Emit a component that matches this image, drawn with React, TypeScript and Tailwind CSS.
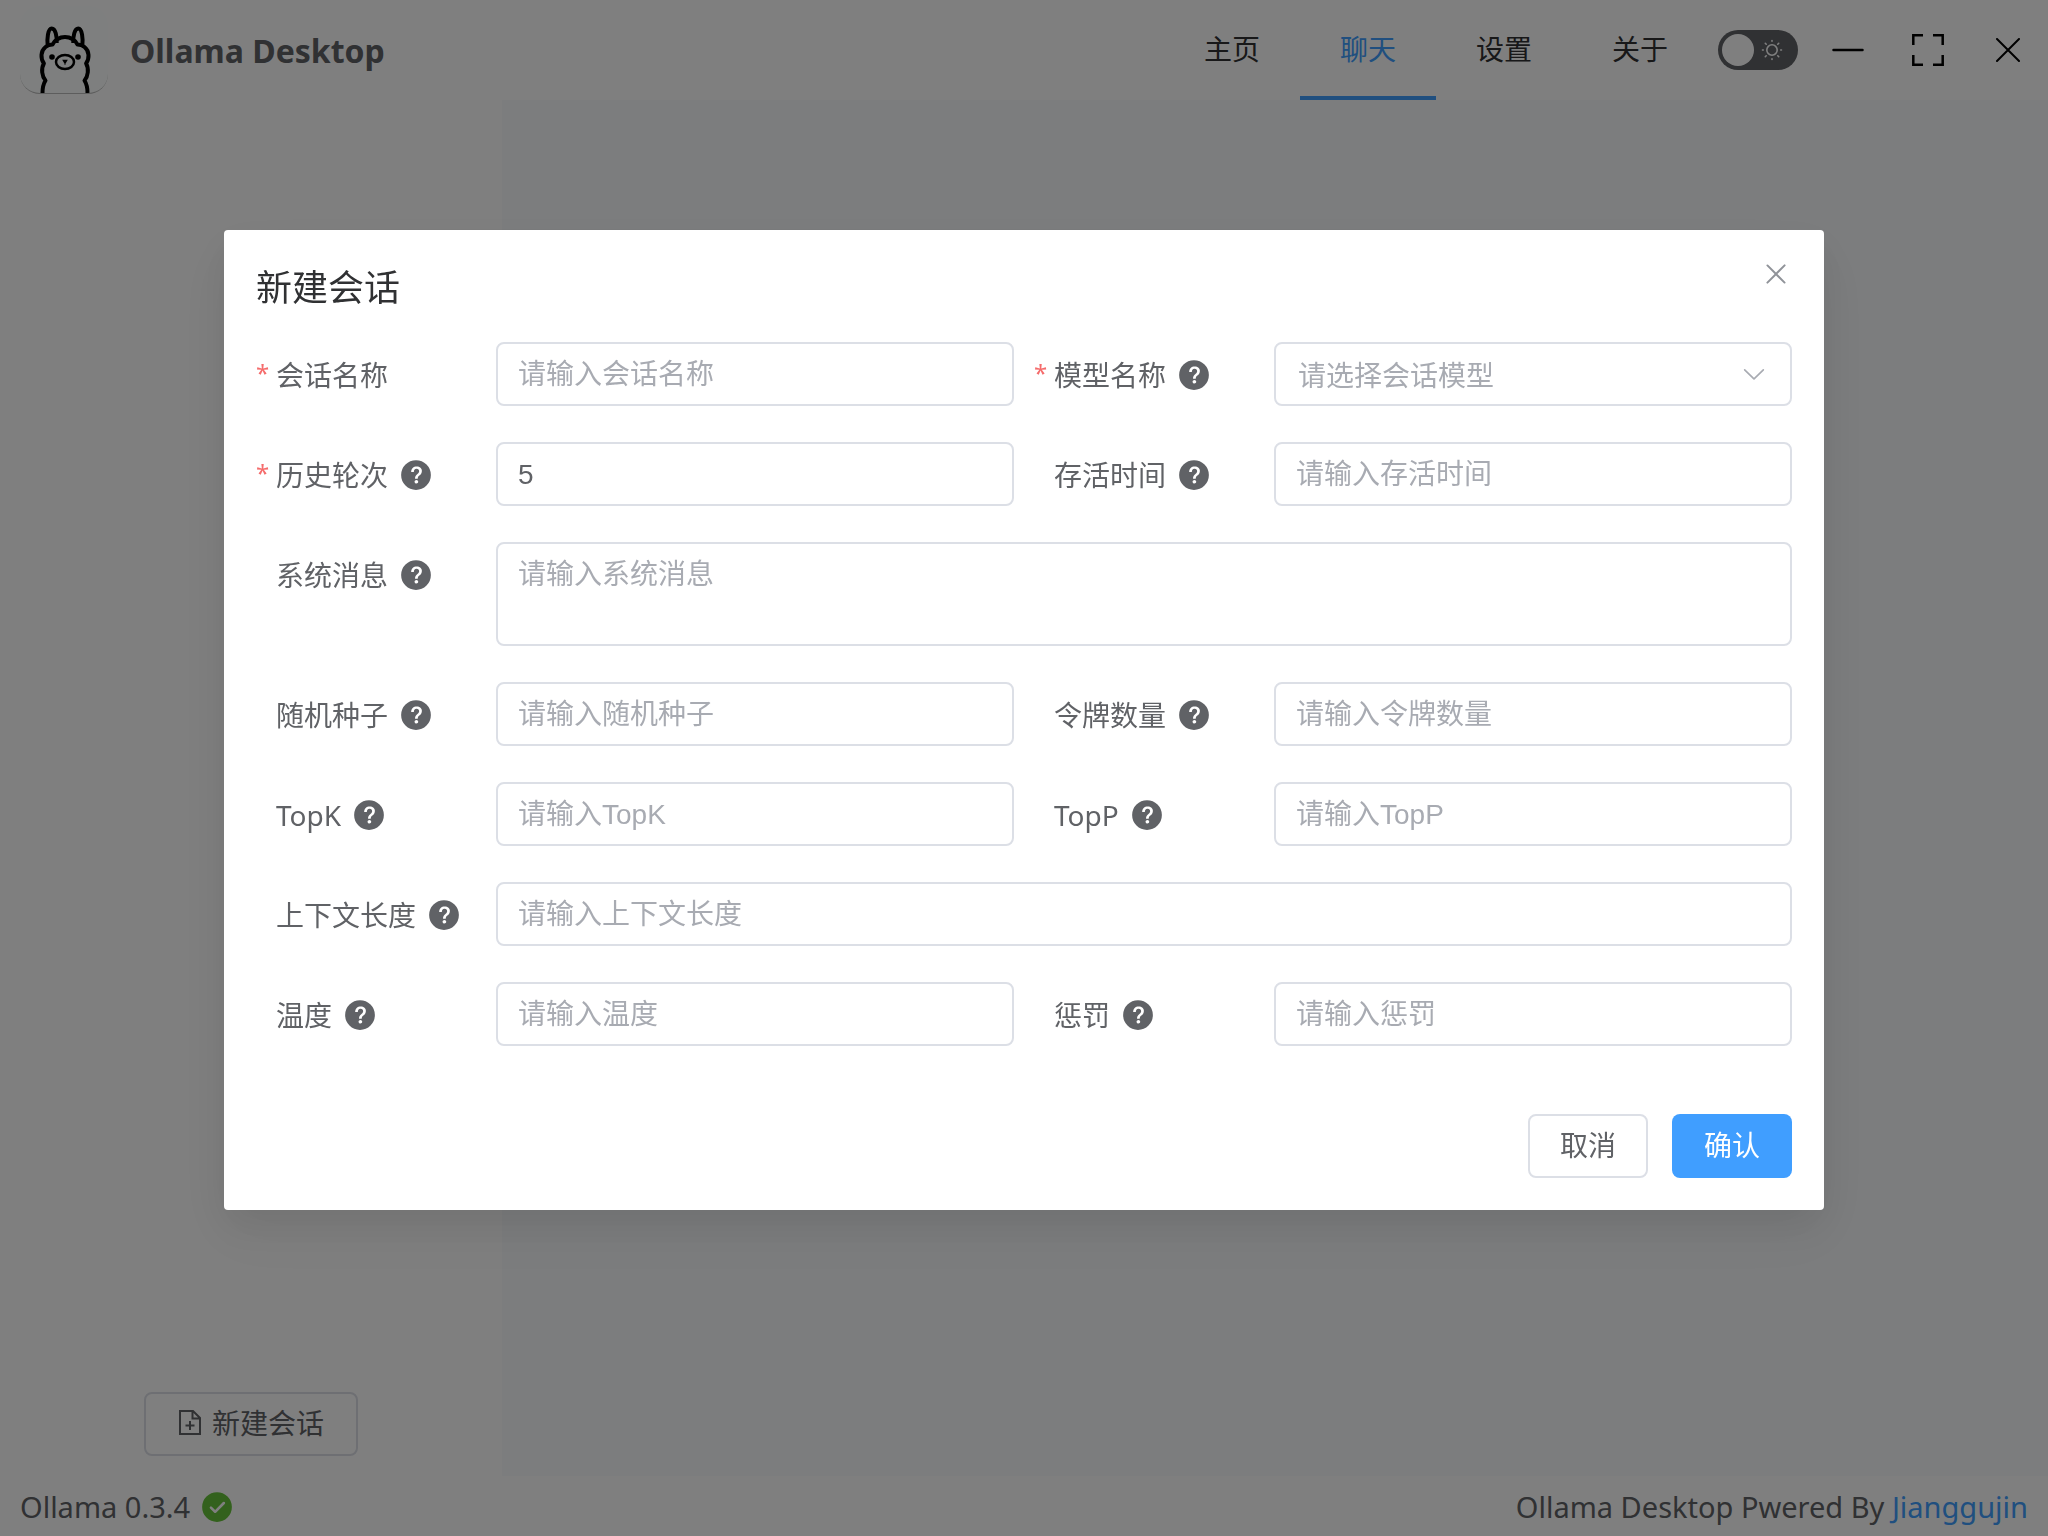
import React, { useState } from "react";

const UI = "font-['Noto_Sans','Noto_Sans_CJK_SC',sans-serif]";
const CONTROL =
  "w-full rounded-lg border-2 border-[#dcdfe6] bg-white px-5 font-['Liberation_Sans','Noto_Sans_CJK_SC',sans-serif] text-[28px] text-[#606266] outline-none placeholder:text-[#a8abb2]";

function Glyph({ d, className }: { d: string; className: string }) {
  return (
    <svg viewBox="0 0 1024 1024" fill="currentColor" className={className} aria-hidden="true">
      <path d={d} />
    </svg>
  );
}

const QUESTION =
  "M512 64a448 448 0 1 1 0 896 448 448 0 0 1 0-896m23.744 191.488c-52.096 0-92.928 14.784-123.2 44.352-30.976 29.568-45.76 70.4-45.76 122.496h80.256c0-29.568 5.632-52.8 17.6-68.992 13.376-19.712 35.2-28.864 66.176-28.864 23.936 0 42.944 6.336 56.32 19.712 12.672 13.376 19.712 31.68 19.712 54.912 0 17.6-6.336 34.496-19.008 49.984l-8.448 9.856c-45.76 40.832-73.216 70.4-82.368 89.408-9.856 19.008-14.08 42.24-14.08 68.992v9.856h80.96v-9.856c0-16.896 3.52-31.68 10.56-45.76 6.336-12.672 15.488-24.64 28.16-35.2 33.792-29.568 54.208-48.576 60.544-55.616 16.896-22.528 26.048-51.392 26.048-86.592 0-42.944-14.08-76.736-42.24-101.376-28.16-25.344-65.472-37.312-111.232-37.312zm-12.672 406.208a54.272 54.272 0 0 0-38.72 14.784 49.408 49.408 0 0 0-15.488 38.016c0 15.488 4.928 28.16 15.488 38.016A54.848 54.848 0 0 0 523.072 768c15.488 0 28.16-4.928 38.72-14.784a51.52 51.52 0 0 0 16.192-38.72 51.968 51.968 0 0 0-15.488-38.016 55.936 55.936 0 0 0-39.424-14.784z";
const SUCCESS =
  "M512 64a448 448 0 1 1 0 896 448 448 0 0 1 0-896m-55.808 536.384-99.52-99.584a38.4 38.4 0 1 0-54.336 54.336l126.72 126.72a38.272 38.272 0 0 0 54.336 0l262.4-262.464a38.4 38.4 0 1 0-54.272-54.336z";
const CLOSE =
  "M764.288 214.592 512 466.88 259.712 214.592a31.936 31.936 0 0 0-45.12 45.12L466.752 512 214.528 764.224a31.936 31.936 0 1 0 45.12 45.184L512 557.184l252.288 252.288a31.936 31.936 0 0 0 45.12-45.12L557.12 512.064l252.288-252.352a31.936 31.936 0 1 0-45.12-45.184z";
const ARROW_DOWN =
  "M831.872 340.864 512 652.672 192.128 340.864a30.592 30.592 0 0 0-42.752 0 29.12 29.12 0 0 0 0 41.6L489.664 714.24a32 32 0 0 0 44.672 0l340.288-331.712a29.12 29.12 0 0 0 0-41.728 30.592 30.592 0 0 0-42.752 0z";

function Logo() {
  return (
    <svg viewBox="0 0 88 74" className="h-[74px] w-[88px]" fill="none" stroke="#000" aria-hidden="true">
      <g strokeWidth="4" strokeLinejoin="round">
        <path d="M22.500 74c0-5 .8-9 3-12.500-3.600-4-4.600-12-1.600-17-3.500-5-3.400-12.500 1.600-16.500 2-1.600 4-2.300 7-2.400 2.500-4.600 7-7.600 12.500-7.600s10 3 12.500 7.600c3 .1 5 .8 7 2.400 5 4 5.100 11.500 1.600 16.500 3 5 2 13-1.600 17 2.200 3.500 3 7.500 3 12.500" />
        <path d="M27.700 27c-.9-7 .2-17.500 4-17.500s5.300 8 5 14.500" />
        <path d="M62.300 27c.9-7-.2-17.500-4-17.500s-5.300 8-5 14.500" />
      </g>
      <ellipse cx="45" cy="43" rx="9" ry="7" strokeWidth="2.500" />
      <path d="M43.500 41.500h3L45 44zM45 43.500v2" fill="#000" strokeWidth="1.500" />
      <circle cx="32" cy="38" r="2.800" fill="#000" stroke="none" />
      <circle cx="58" cy="38" r="2.800" fill="#000" stroke="none" />
    </svg>
  );
}

function Header() {
  const tabs = ["主页", "聊天", "设置", "关于"];
  return (
    <header className="flex h-[100px] shrink-0 items-center justify-between bg-white pl-5">
      <div className="flex items-center gap-[22px]">
        <div className="flex h-[88px] w-[88px] items-end overflow-hidden rounded-[20px] border-b border-[#bbb] bg-[#fcfffe]">
          <Logo />
        </div>
        <h1 className="pt-0.5 text-[32px] font-bold leading-[44px] text-[#606266]">Ollama Desktop</h1>
      </div>
      <div className="flex items-center">
        <nav className="flex">
          {tabs.map((t) => (
            <a
              key={t}
              href="#"
              className={
                t === "聊天"
                  ? "flex h-[100px] items-center border-b-4 border-[#409eff] px-10 pt-0.5 text-[28px] text-[#409eff]"
                  : "flex h-[100px] items-center border-b-4 border-transparent px-10 pt-0.5 text-[28px] text-[#303133]"
              }
            >
              {t}
            </a>
          ))}
        </nav>
        <button
          type="button"
          role="switch"
          aria-checked="false"
          aria-label="主题"
          className="ml-2.5 flex h-10 w-20 items-center justify-between rounded-full bg-[#606266] pl-1 pr-3.5"
        >
          <span className="size-8 rounded-full bg-white" />
          <svg viewBox="0 0 24 24" className="size-6 text-white" fill="none" stroke="currentColor" strokeWidth="1.600" strokeLinecap="round" aria-hidden="true">
            <circle cx="12" cy="12" r="5.200" />
            <path d="M12 2.500v.8M12 20.700v.8M2.500 12h.8M20.700 12h.8M5.300 5.300l.9.9M17.800 17.800l.9.900M5.300 18.700l.9-.9M17.800 6.200l.9-.9" />
          </svg>
        </button>
        <button type="button" aria-label="最小化" className="ml-2.5 flex size-20 items-center justify-center">
          <svg viewBox="0 0 32 32" className="size-8" stroke="#000" strokeWidth="2.500" strokeLinecap="round"><path d="M1.500 16h29" /></svg>
        </button>
        <button type="button" aria-label="最大化" className="flex size-20 items-center justify-center">
          <svg viewBox="0 0 32 32" className="size-8" stroke="#000" fill="none" strokeWidth="2.500">
            <path d="M1.300 11V1.300H11M21 1.300h9.700V11M30.700 21v9.700H21M11 30.700H1.300V21" />
          </svg>
        </button>
        <button type="button" aria-label="关闭" className="flex size-20 items-center justify-center">
          <svg viewBox="0 0 24 24" className="size-6" stroke="#000" strokeWidth="2" strokeLinecap="round"><path d="M1 1l22 22M23 1 1 23" /></svg>
        </button>
      </div>
    </header>
  );
}

interface Item {
  id: string;
  label: string;
  hint: string;
  required?: boolean;
  help?: boolean;
  wide?: boolean;
  kind?: "select" | "textarea";
  value?: string;
}

const ITEMS: Item[] = [
  { id: "name", label: "会话名称", hint: "请输入会话名称", required: true, help: false },
  { id: "model", label: "模型名称", hint: "请选择会话模型", required: true, kind: "select" },
  { id: "history", label: "历史轮次", hint: "请输入历史轮次", required: true, value: "5" },
  { id: "alive", label: "存活时间", hint: "请输入存活时间" },
  { id: "system", label: "系统消息", hint: "请输入系统消息", wide: true, kind: "textarea" },
  { id: "seed", label: "随机种子", hint: "请输入随机种子" },
  { id: "tokens", label: "令牌数量", hint: "请输入令牌数量" },
  { id: "topk", label: "TopK", hint: "请输入TopK" },
  { id: "topp", label: "TopP", hint: "请输入TopP" },
  { id: "context", label: "上下文长度", hint: "请输入上下文长度", wide: true },
  { id: "temperature", label: "温度", hint: "请输入温度" },
  { id: "penalty", label: "惩罚", hint: "请输入惩罚" },
];

function Field({ item }: { item: Item }) {
  const [value, setValue] = useState(item.value ?? "");
  return (
    <div className={item.wide ? "col-span-2 flex" : "flex"}>
      <label htmlFor={item.id} className="flex h-16 w-60 shrink-0 items-center pt-0.5 text-[28px] text-[#606266]">
        <span className="mr-2 w-3 pb-1 text-2xl text-[#f56c6c]">{item.required ? "*" : ""}</span>
        {item.label}
        {item.help !== false && <Glyph d={QUESTION} className="ml-[11px] size-[34px]" />}
      </label>
      {item.kind === "textarea" ? (
        <textarea
          id={item.id}
          value={value}
          onChange={(e) => setValue(e.target.value)}
          placeholder={item.hint}
          className={`${CONTROL} block h-[104px] resize-none py-2.5 leading-[42px]`}
        />
      ) : item.kind === "select" ? (
        <div className="relative w-full">
          <select
            id={item.id}
            value={value}
            onChange={(e) => setValue(e.target.value)}
            className="h-16 w-full appearance-none rounded-lg border-2 border-[#dcdfe6] bg-white px-[22px] pt-0.5 text-[28px] text-[#a8abb2] outline-none"
          >
            <option value="">{item.hint}</option>
          </select>
          <Glyph d={ARROW_DOWN} className="pointer-events-none absolute right-6 top-[18px] size-7 text-[#a8abb2]" />
        </div>
      ) : (
        <input
          id={item.id}
          type="text"
          value={value}
          onChange={(e) => setValue(e.target.value)}
          placeholder={item.hint}
          className={`${CONTROL} h-16 pt-0.5`}
        />
      )}
    </div>
  );
}

function Dialog() {
  return (
    <div className="fixed inset-0 flex items-start justify-center bg-black/50 pt-[230px]">
      <form
        role="dialog"
        aria-labelledby="dialog-title"
        onSubmit={(e) => e.preventDefault()}
        className="relative w-[1600px] max-w-full rounded bg-white p-8 shadow-[0_24px_64px_8px_rgba(0,0,0,0.04),0_16px_40px_rgba(0,0,0,0.08)]"
      >
        <h2 id="dialog-title" className="text-[36px] leading-[52px] text-[#303133]">新建会话</h2>
        <button type="button" aria-label="关闭对话框" className="absolute right-0 top-0 flex h-[88px] w-24 items-center justify-center text-[#909399]">
          <Glyph d={CLOSE} className="size-8" />
        </button>
        <div className="mt-7 grid grid-cols-2 gap-x-5 gap-y-9">
          {ITEMS.map((item) => (
            <Field key={item.id} item={item} />
          ))}
        </div>
        <div className="mt-[68px] flex justify-end gap-6">
          <button type="button" className="h-16 w-[120px] rounded-lg border-2 border-[#dcdfe6] pb-0.5 text-[28px] text-[#606266]">取消</button>
          <button type="submit" className="h-16 w-[120px] rounded-lg bg-[#409eff] pb-0.5 text-[28px] text-white">确认</button>
        </div>
      </form>
    </div>
  );
}

export default function App() {
  return (
    <div className={`${UI} flex min-h-screen flex-col bg-white`}>
      <Header />
      <div className="flex grow">
        <aside className="flex w-[502px] shrink-0 flex-col items-center justify-end pb-5">
          <button type="button" className="flex h-16 items-center gap-2.5 rounded-lg border-2 border-[#dcdfe6] px-8 pb-0.5 text-[28px] text-[#606266]">
            <svg viewBox="0 0 24 28" className="h-7 w-6" fill="none" stroke="currentColor" strokeWidth="2" aria-hidden="true">
              <path d="M2 2h13l7 7v16H2zM14.500 2v7.500H22M12 12v9M7.500 16.500h9" />
            </svg>
            新建会话
          </button>
        </aside>
        <main className="grow bg-[#f9fafc]" />
      </div>
      <footer className="flex h-[60px] shrink-0 items-center justify-between px-5 pt-0.5 text-[29px] text-[#606266]">
        <div className="flex items-center gap-2.5">
          Ollama 0.3.4
          <Glyph d={SUCCESS} className="size-[34px] text-[#67c23a]" />
        </div>
        <div>
          Ollama Desktop Pwered By <a href="#" className="text-[#409eff]">Jianggujin</a>
        </div>
      </footer>
      <Dialog />
    </div>
  );
}
